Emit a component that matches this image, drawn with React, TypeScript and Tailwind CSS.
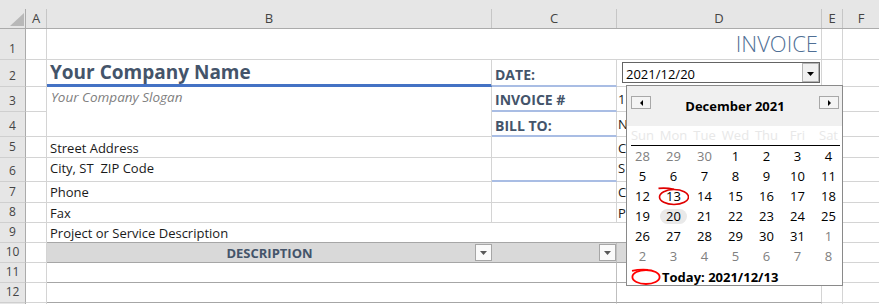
import React from 'react';

const GRID = 'border-r border-b border-[#d4d4d4]';

type CellProps = { w: string; g?: string; className?: string; children?: React.ReactNode };

function Cell({ w, g = GRID, className = '', children }: CellProps) {
  return (
    <div className={`relative shrink-0 h-full flex overflow-hidden whitespace-pre ${w} ${g} ${className}`}>
      {children}
    </div>
  );
}

function Row({ n, h, children }: { n?: number; h: string; children: React.ReactNode }) {
  return (
    <div className={`flex ${h}`}>
      <div className="w-[26px] shrink-0 h-full flex items-end justify-center pb-[4px] bg-[#e6e6e6] border-r border-b border-r-[#ababab] border-b-[#cfcfcf] text-[12px] leading-none text-[#444]">
        {n}
      </div>
      <Cell w="w-[21px]" />
      {children}
      <Cell w="w-[21px]" />
      <Cell w="flex-1" g="border-b border-[#d4d4d4]" />
    </div>
  );
}

function FilterButton() {
  return (
    <div className="absolute right-0 top-[1px] w-[17px] h-[17px] bg-[#fafafa] border border-[#a6a6a6] flex items-center justify-center">
      <svg width="7" height="4" viewBox="0 0 7 4">
        <polygon points="0,0 7,0 3.5,4" fill="#595959" />
      </svg>
    </div>
  );
}

const columns: [string, string][] = [
  ['A', 'w-[21px] border-r'],
  ['B', 'w-[445px] border-r'],
  ['C', 'w-[125px] border-r'],
  ['D', 'w-[205px] border-r'],
  ['E', 'w-[21px] border-r'],
  ['F', 'flex-1'],
];

type Day = { d: number; muted?: boolean };

const weeks: Day[][] = [
  [{ d: 28, muted: true }, { d: 29, muted: true }, { d: 30, muted: true }, { d: 1 }, { d: 2 }, { d: 3 }, { d: 4 }],
  [{ d: 5 }, { d: 6 }, { d: 7 }, { d: 8 }, { d: 9 }, { d: 10 }, { d: 11 }],
  [{ d: 12 }, { d: 13 }, { d: 14 }, { d: 15 }, { d: 16 }, { d: 17 }, { d: 18 }],
  [{ d: 19 }, { d: 20 }, { d: 21 }, { d: 22 }, { d: 23 }, { d: 24 }, { d: 25 }],
  [{ d: 26 }, { d: 27 }, { d: 28 }, { d: 29 }, { d: 30 }, { d: 31 }, { d: 1, muted: true }],
  [2, 3, 4, 5, 6, 7, 8].map((d) => ({ d, muted: true })),
];

// positions in the flattened month grid
const TODAY = 15; // 13th
const SELECTED = 22; // 20th

function Calendar() {
  return (
    <div className="absolute left-[626px] top-[85px] z-10 w-[217px] h-[201px] bg-white border border-[#8a8a8a] overflow-hidden text-[13px] text-black">
      {/* month header */}
      <div className="h-[40px] bg-[#f0f0f0] flex items-start pt-[10px] pl-[4px] pr-[3px]">
        <div className="w-[20px] h-[13px] border border-[#a8a8a8] bg-[#f4f4f4] flex items-center justify-center">
          <svg width="3" height="6" viewBox="0 0 3 6">
            <polygon points="3,0 3,6 0,3" fill="#000" />
          </svg>
        </div>
        <div className="flex-1 text-center font-bold leading-[16px] mt-[2px]">December 2021</div>
        <div className="w-[20px] h-[13px] border border-[#a8a8a8] bg-[#f4f4f4] flex items-center justify-center">
          <svg width="3" height="6" viewBox="0 0 3 6">
            <polygon points="0,0 0,6 3,3" fill="#000" />
          </svg>
        </div>
      </div>

      {/* weekday labels */}
      <div className="grid grid-cols-[repeat(7,31px)] h-[19px] leading-[19px] text-center text-[#e8e8e8]">
        {['Sun', 'Mon', 'Tue', 'Wed', 'Thu', 'Fri', 'Sat'].map((w) => (
          <div key={w}>{w}</div>
        ))}
      </div>
      <div className="ml-[4px] mr-[2px] h-px bg-black" />

      {/* days */}
      <div className="grid grid-cols-[repeat(7,31px)] auto-rows-[20px] leading-[20px]">
        {weeks.flat().map((day, i) => (
          <div key={i} className="relative h-[20px] flex items-center justify-center">
            {i === SELECTED ? (
              <span className="w-[27px] h-[15px] leading-[15px] text-center rounded-full bg-[#e9e9e9] mt-[1px]">
                {day.d}
              </span>
            ) : (
              <span className={day.muted ? 'text-[#808080]' : ''}>{day.d}</span>
            )}
            {i === TODAY && (
              <svg className="absolute left-0 top-0" width="31" height="20" viewBox="0 0 31 20">
                <ellipse cx="16" cy="11" rx="14.5" ry="7.5" fill="none" stroke="#e00000" strokeWidth="1.6" />
                <path d="M0.5 2.4 Q8 1.6 16 3.2" fill="none" stroke="#e00000" strokeWidth="1.6" />
              </svg>
            )}
          </div>
        ))}
      </div>

      {/* today */}
      <div className="flex items-start h-[19px] pl-[4px]">
        <svg className="mt-[2px] shrink-0" width="30" height="17" viewBox="0 0 30 17">
          <ellipse cx="15" cy="9" rx="13.6" ry="7" fill="none" stroke="#ff0000" strokeWidth="1.8" />
          <path d="M1 2.8 Q8 1.2 17 1.8" fill="none" stroke="#ff0000" strokeWidth="1.8" />
        </svg>
        <span className="ml-[1px] font-bold leading-[19px] pt-[2px]">Today: 2021/12/13</span>
      </div>
    </div>
  );
}

export default function App() {
  return (
    <div className="relative w-[879px] h-[304px] overflow-hidden bg-white font-['Open_Sans',sans-serif] text-[13px] leading-none text-[#1a1a1a]">
      {/* column headers */}
      <div className="flex h-[29px] bg-[#e6e6e6] border-b border-[#ababab] text-[13px] text-[#444]">
        <div className="w-[26px] shrink-0 mt-[9px] border-r border-[#ababab]">
          <svg width="25" height="19" viewBox="0 0 25 19">
            <polygon points="24,4 24,17 10,17" fill="#b8b8b8" />
          </svg>
        </div>
        {columns.map(([label, cls]) => (
          <div key={label} className={`shrink-0 mt-[9px] flex items-end justify-center pb-[3px] border-[#c6c6c6] ${cls}`}>
            {label}
          </div>
        ))}
      </div>

      <Row n={1} h="h-[31px]">
        <Cell w="w-[775px]" className="justify-end items-start pt-[3px] pr-[3px]">
          <span className="text-[22px] font-light text-[#4f6f95]">INVOICE</span>
        </Cell>
      </Row>

      <Row n={2} h="h-[27px]">
        <Cell
          w="w-[445px]"
          g="border-r border-r-[#d4d4d4] border-b-[3px] border-b-[#4472c4]"
          className="items-start pt-[3px] pl-[3px]"
        >
          <span className="text-[19px] font-bold text-[#44546a]">Your Company Name</span>
        </Cell>
        <Cell
          w="w-[125px]"
          g="border-r border-r-[#d4d4d4] border-b-2 border-b-[#a9bde4]"
          className="items-start pt-[8px] pl-[3px]"
        >
          <span className="text-[14px] font-bold text-[#44546a]">DATE:</span>
        </Cell>
        <Cell w="w-[205px]">
          <div className="ml-[5px] mt-[2px] w-[198px] h-[21px] border border-[#646464] bg-white flex">
            <div className="flex-1 pl-[3px] pt-[5px] text-[13px] text-black">2021/12/20</div>
            <div className="w-[17px] h-full border border-[#b4b4b4] bg-[#f0f0f0] flex items-center justify-center pt-[2px]">
              <svg width="7" height="4" viewBox="0 0 7 4">
                <polygon points="0,0 7,0 3.5,4" fill="#000" />
              </svg>
            </div>
          </div>
        </Cell>
      </Row>

      <Row n={3} h="h-[25px]">
        <Cell w="w-[445px]" g="border-r border-[#d4d4d4]" className="items-start pt-[4px] pl-[4px]">
          <span className="italic text-[13.5px] text-[#808080]">Your Company Slogan</span>
        </Cell>
        <Cell
          w="w-[125px]"
          g="border-r border-r-[#d4d4d4] border-b-2 border-b-[#a9bde4]"
          className="items-start pt-[6px] pl-[3px]"
        >
          <span className="text-[14px] font-bold text-[#44546a]">INVOICE #</span>
        </Cell>
        <Cell w="w-[205px]" className="items-start pt-[6px] pl-[1px]">1</Cell>
      </Row>

      <Row n={4} h="h-[25px]">
        <Cell w="w-[445px]" />
        <Cell
          w="w-[125px]"
          g="border-r border-r-[#d4d4d4] border-b-2 border-b-[#a9bde4]"
          className="items-start pt-[7px] pl-[3px]"
        >
          <span className="text-[14px] font-bold text-[#44546a]">BILL TO:</span>
        </Cell>
        <Cell w="w-[205px]" className="items-start pt-[6px] pl-[1px]">N</Cell>
      </Row>

      <Row n={5} h="h-[21px]">
        <Cell w="w-[445px]" className="items-start pt-[5px] pl-[3px]">Street Address</Cell>
        <Cell w="w-[125px]" />
        <Cell w="w-[205px]" className="items-start pt-[5px] pl-[1px]">C</Cell>
      </Row>

      <Row n={6} h="h-[24px]">
        <Cell w="w-[445px]" className="items-start pt-[4px] pl-[3px]">City, ST  ZIP Code</Cell>
        <Cell w="w-[125px]" g="border-r border-r-[#d4d4d4] border-b-2 border-b-[#a9bde4]" />
        <Cell w="w-[205px]" className="items-start pt-[4px] pl-[1px]">S</Cell>
      </Row>

      <Row n={7} h="h-[21px]">
        <Cell w="w-[445px]" className="items-start pt-[4px] pl-[3px]">Phone</Cell>
        <Cell w="w-[125px]" />
        <Cell w="w-[205px]" className="items-start pt-[4px] pl-[1px]">C</Cell>
      </Row>

      <Row n={8} h="h-[20px]">
        <Cell w="w-[445px]" className="items-start pt-[4px] pl-[3px]">Fax</Cell>
        <Cell w="w-[125px]" />
        <Cell w="w-[205px]" className="items-start pt-[4px] pl-[1px]">P</Cell>
      </Row>

      <Row n={9} h="h-[20px]">
        <Cell
          w="w-[775px]"
          g="border-r border-b border-r-[#d4d4d4] border-b-[#a6a6a6]"
          className="items-start pt-[4px] pl-[3px]"
        >
          Project or Service Description
        </Cell>
      </Row>

      <Row n={10} h="h-[20px]">
        <Cell w="w-[445px]" g="border-b border-[#a6a6a6]" className="bg-[#d9d9d9] justify-center items-start pt-[4px]">
          <span className="font-bold text-[#44546a]">DESCRIPTION</span>
          <FilterButton />
        </Cell>
        <Cell w="w-[125px]" g="border-r border-b border-r-[#bfbfbf] border-b-[#a6a6a6]" className="bg-[#d9d9d9]">
          <FilterButton />
        </Cell>
        <Cell w="w-[205px]" g="border-r border-b border-r-[#d4d4d4] border-b-[#a6a6a6]" className="bg-[#d9d9d9]" />
      </Row>

      {[11, 12].map((n) => (
        <Row key={n} n={n} h="h-[20px]">
          <Cell w="w-[570px]" g="border-r border-b border-r-[#bfbfbf] border-b-[#a6a6a6]" />
          <Cell w="w-[205px]" g="border-r border-b border-r-[#d4d4d4] border-b-[#a6a6a6]" />
        </Row>
      ))}

      <Row h="h-[20px]">
        <Cell w="w-[570px]" />
        <Cell w="w-[205px]" />
      </Row>

      <Calendar />
    </div>
  );
}
